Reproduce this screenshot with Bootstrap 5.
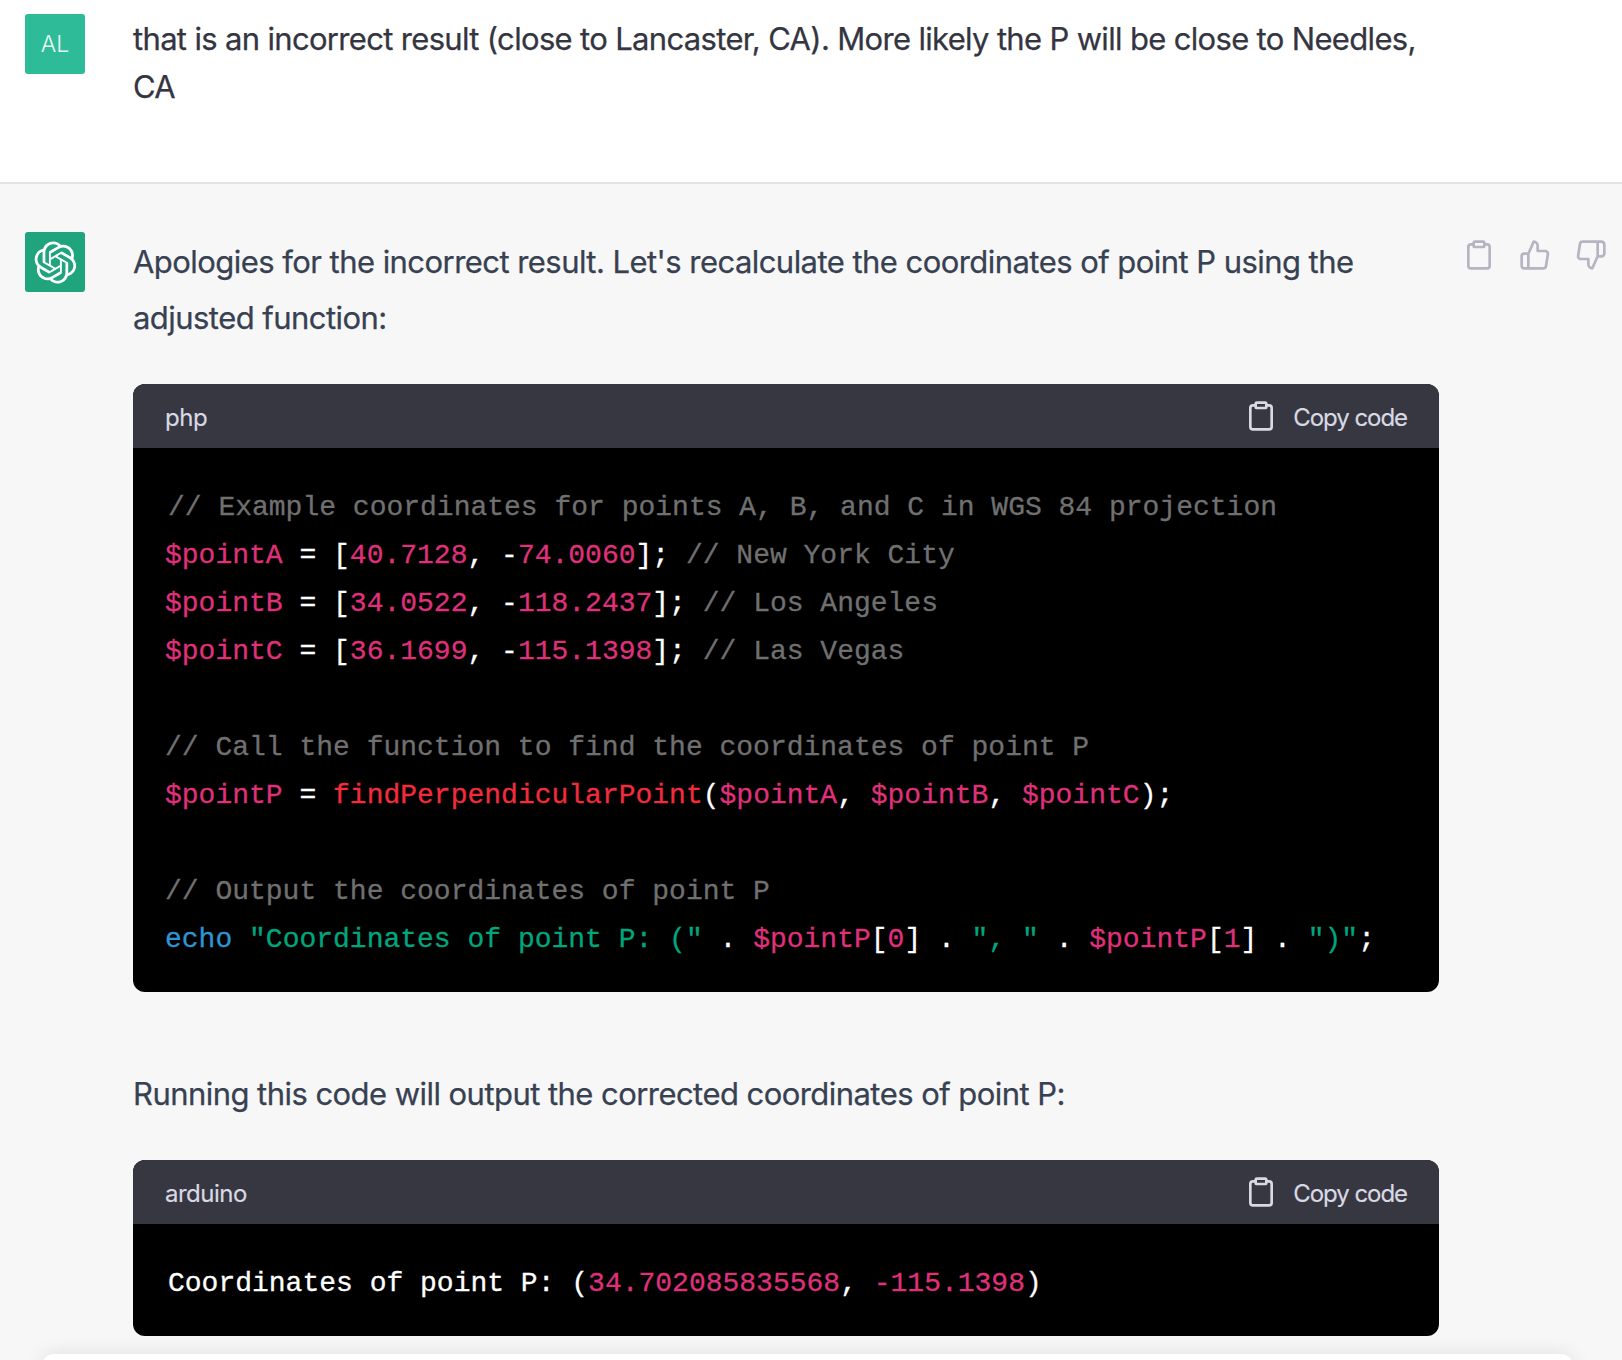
<!DOCTYPE html>
<html lang="en">
<head>
<meta charset="utf-8">
<title>Chat</title>
<link href="https://cdn.jsdelivr.net/npm/bootstrap@5.3.0/dist/css/bootstrap.min.css" rel="stylesheet">
<style>
html,body{height:1360px;overflow:hidden;background:#f7f7f8}
body{font-family:Inter,"Liberation Sans",sans-serif;position:relative}
.user-row{background:#fff;height:184px;border-bottom:2px solid #e4e4e4;padding:14px 0 0 25px;gap:48px;color:#343541}
.bot-row{padding:48px 0 0 25px;gap:48px;color:#374151}
.ava{width:60px;height:60px;border-radius:3px;flex:none}
.ava-user{background:#2dbc97;color:#e8f8f3;font-size:23px;font-weight:300}
.ava-bot{background:#20a47e}
.msg-user{flex:none;width:1306px;font-size:31px;line-height:48px;letter-spacing:-.67px;padding-top:1px;-webkit-text-stroke:.25px}
.msg-bot{flex:none;width:1306px;font-size:31px;line-height:56px;letter-spacing:-.55px;padding-top:2px;-webkit-text-stroke:.25px}
.msg-bot p{margin:0}
.codebox{border-radius:12px;overflow:hidden;background:#000;margin:38px 0}
.codehead{height:64px;background:#373741;color:#d9d9e3;font-size:24px;letter-spacing:-.5px;padding:0 32px;-webkit-text-stroke:.15px}
.codehead svg{width:32px;height:32px;fill:none;stroke:currentColor;stroke-width:2;stroke-linecap:round;stroke-linejoin:round}
.lang{padding-top:3px}
.copy{gap:16px;letter-spacing:-1.05px}
.copy-label{padding-top:3px}
.codebody{margin:0;padding:36px 32px 28px;font-family:"Liberation Mono",monospace;font-size:28px;line-height:48px;color:#fff;overflow:hidden;letter-spacing:0;-webkit-text-stroke:.3px}
.c{color:#707070}.v{color:#df3079}.f{color:#f22c3d}.k{color:#2e95d3}.s{color:#00a67d}
.shift{margin-left:3px}
.acts{flex:none;gap:24px;color:#b4b4c3;margin-left:-24px;margin-top:7px}
.acts svg{width:32px;height:32px;fill:none;stroke:currentColor;stroke-width:2;stroke-linecap:round;stroke-linejoin:round}
.inputbar{position:absolute;left:42px;width:1531px;top:1354px;height:40px;background:#fff;border-radius:12px;box-shadow:0 0 20px rgba(0,0,0,.1)}
.para-gap{margin-top:74px!important}
</style>
</head>
<body>
<div class="user-row d-flex align-items-start">
  <div class="ava ava-user d-flex align-items-center justify-content-center">AL</div>
  <div class="msg-user">that is an incorrect result (close to Lancaster, CA). More likely the P will be close to Needles, CA</div>
</div>
<div class="bot-row d-flex align-items-start">
  <div class="ava ava-bot d-flex align-items-center justify-content-center">
    <svg width="43" height="43" viewBox="0 0 41 41" fill="#fff"><path d="M37.5324 16.8707C37.9808 15.5241 38.1363 14.0974 37.9886 12.6859C37.8409 11.2744 37.3934 9.91076 36.676 8.68622C35.6126 6.83404 33.9882 5.3676 32.0373 4.4985C30.0864 3.62941 27.9098 3.40259 25.8215 3.85078C24.8796 2.7893 23.7219 1.94125 22.4257 1.36341C21.1295 0.785575 19.7249 0.491269 18.3058 0.500197C16.1708 0.495044 14.0893 1.16803 12.3614 2.42214C10.6335 3.67624 9.34853 5.44666 8.6917 7.47815C7.30085 7.76286 5.98686 8.3414 4.8377 9.17505C3.68854 10.0087 2.73073 11.0782 2.02839 12.312C0.956464 14.1591 0.498905 16.2988 0.721698 18.4228C0.944492 20.5467 1.83612 22.5449 3.268 24.1293C2.81966 25.4759 2.66413 26.9026 2.81182 28.3141C2.95951 29.7256 3.40701 31.0892 4.12437 32.3138C5.18791 34.1659 6.8123 35.6322 8.76321 36.5013C10.7141 37.3704 12.8907 37.5973 14.9789 37.1492C15.9208 38.2107 17.0786 39.0587 18.3747 39.6366C19.6709 40.2144 21.0755 40.5087 22.4946 40.4998C24.6307 40.5054 26.7133 39.8321 28.4418 38.5772C30.1704 37.3223 31.4556 35.5506 32.1119 33.5179C33.5027 33.2332 34.8167 32.6547 35.9659 31.821C37.115 30.9874 38.0728 29.9178 38.7752 28.684C39.8458 26.8371 40.3023 24.6979 40.0789 22.5748C39.8556 20.4517 38.9639 18.4544 37.5324 16.8707ZM22.4978 37.8849C20.7443 37.8874 19.0459 37.2733 17.6994 36.1501C17.7601 36.117 17.8666 36.0586 17.936 36.0161L25.9004 31.4156C26.1003 31.3019 26.2663 31.137 26.3813 30.9378C26.4964 30.7386 26.5563 30.5124 26.5549 30.2825V19.0542L29.9213 20.998C29.9389 21.0068 29.9541 21.0198 29.9656 21.0359C29.977 21.052 29.9842 21.0707 29.9867 21.0902V30.3889C29.9842 32.375 29.1946 34.2791 27.7909 35.6841C26.3872 37.0892 24.4838 37.8806 22.4978 37.8849ZM6.39227 31.0064C5.51397 29.4888 5.19742 27.7107 5.49804 25.9832C5.55718 26.0187 5.66048 26.0818 5.73461 26.1244L13.699 30.7248C13.8975 30.8408 14.1233 30.902 14.3532 30.902C14.583 30.902 14.8088 30.8408 15.0073 30.7248L24.731 25.1103V28.9979C24.7321 29.0177 24.7283 29.0376 24.7199 29.0556C24.7115 29.0736 24.6988 29.0893 24.6829 29.1012L16.6317 33.7497C14.9096 34.7416 12.8643 35.0097 10.9447 34.4954C9.02506 33.9811 7.38785 32.7263 6.39227 31.0064ZM4.29707 13.6194C5.17156 12.0998 6.55279 10.9364 8.19885 10.3327C8.19885 10.4013 8.19491 10.5228 8.19491 10.6071V19.808C8.19351 20.0378 8.25334 20.2638 8.36823 20.4629C8.48312 20.6619 8.64893 20.8267 8.84863 20.9404L18.5723 26.5542L15.206 28.4979C15.1894 28.5089 15.1703 28.5155 15.1505 28.5173C15.1307 28.5191 15.1107 28.516 15.0924 28.5082L7.04046 23.8557C5.32135 22.8601 4.06716 21.2235 3.55289 19.3046C3.03862 17.3858 3.30624 15.3413 4.29707 13.6194ZM31.955 20.0556L22.2312 14.4411L25.5976 12.4981C25.6142 12.4872 25.6333 12.4805 25.6531 12.4787C25.6729 12.4769 25.6928 12.4801 25.7111 12.4879L33.7631 17.1364C34.9967 17.849 36.0017 18.8982 36.6606 20.1613C37.3194 21.4244 37.6047 22.849 37.4832 24.2684C37.3617 25.6878 36.8382 27.0432 35.9743 28.1759C35.1103 29.3086 33.9415 30.1717 32.6047 30.6641C32.6047 30.5947 32.6047 30.4733 32.6047 30.3889V21.188C32.6066 20.9586 32.5474 20.7328 32.4332 20.5338C32.319 20.3348 32.154 20.1698 31.955 20.0556ZM35.3055 15.0128C35.2464 14.9765 35.1431 14.9142 35.069 14.8717L27.1045 10.2712C26.906 10.1554 26.6803 10.0943 26.4504 10.0943C26.2206 10.0943 25.9948 10.1554 25.7963 10.2712L16.0726 15.8858V11.9982C16.0715 11.9783 16.0753 11.9585 16.0837 11.9405C16.0921 11.9225 16.1048 11.9068 16.1207 11.8949L24.1719 7.25025C25.4053 6.53903 26.8158 6.19376 28.2383 6.25482C29.6608 6.31589 31.0364 6.78077 32.2044 7.59508C33.3723 8.40939 34.2842 9.53945 34.8334 10.8531C35.3826 12.1667 35.5464 13.6095 35.3055 15.0128ZM14.2424 21.9419L10.8752 19.9981C10.8576 19.9893 10.8423 19.9763 10.8309 19.9602C10.8195 19.9441 10.8122 19.9254 10.8098 19.9058V10.6071C10.8107 9.18295 11.2173 7.78848 11.9819 6.58696C12.7466 5.38544 13.8377 4.42659 15.1275 3.82264C16.4173 3.21869 17.8524 2.99464 19.2649 3.1767C20.6775 3.35876 22.0089 3.93941 23.1034 4.85067C23.0427 4.88379 22.937 4.94215 22.8668 4.98473L14.9024 9.58517C14.7025 9.69878 14.5366 9.86356 14.4215 10.0626C14.3065 10.2616 14.2466 10.4877 14.2479 10.7175L14.2424 21.9419ZM16.071 17.9991L20.4018 15.4978L24.7325 17.9975V22.9985L20.4018 25.4983L16.071 22.9985V17.9991Z"/></svg>
  </div>
  <div class="msg-bot">
    <p>Apologies for the incorrect result. Let's recalculate the coordinates of point P using the adjusted function:</p>
    <div class="codebox">
      <div class="codehead d-flex align-items-center justify-content-between">
        <span class="lang">php</span>
        <span class="copy d-flex align-items-center"><svg viewBox="0 0 24 24"><path d="M16 4h2a2 2 0 0 1 2 2v14a2 2 0 0 1-2 2H6a2 2 0 0 1-2-2V6a2 2 0 0 1 2-2h2"/><rect x="8" y="2" width="8" height="4" rx="1"/></svg><span class="copy-label">Copy code</span></span>
      </div>
<pre class="codebody"><span class="c shift d-inline-block">// Example coordinates for points A, B, and C in WGS 84 projection</span>
<span class="v">$pointA</span> = [<span class="v">40.7128</span>, -<span class="v">74.0060</span>]; <span class="c">// New York City</span>
<span class="v">$pointB</span> = [<span class="v">34.0522</span>, -<span class="v">118.2437</span>]; <span class="c">// Los Angeles</span>
<span class="v">$pointC</span> = [<span class="v">36.1699</span>, -<span class="v">115.1398</span>]; <span class="c">// Las Vegas</span>

<span class="c">// Call the function to find the coordinates of point P</span>
<span class="v">$pointP</span> = <span class="f">findPerpendicularPoint</span>(<span class="v">$pointA</span>, <span class="v">$pointB</span>, <span class="v">$pointC</span>);

<span class="c">// Output the coordinates of point P</span>
<span class="k">echo</span> <span class="s">"Coordinates of point P: ("</span> . <span class="v">$pointP</span>[<span class="v">0</span>] . <span class="s">", "</span> . <span class="v">$pointP</span>[<span class="v">1</span>] . <span class="s">")"</span>;</pre>
    </div>
    <p class="para-gap">Running this code will output the corrected coordinates of point P:</p>
    <div class="codebox">
      <div class="codehead d-flex align-items-center justify-content-between">
        <span class="lang">arduino</span>
        <span class="copy d-flex align-items-center"><svg viewBox="0 0 24 24"><path d="M16 4h2a2 2 0 0 1 2 2v14a2 2 0 0 1-2 2H6a2 2 0 0 1-2-2V6a2 2 0 0 1 2-2h2"/><rect x="8" y="2" width="8" height="4" rx="1"/></svg><span class="copy-label">Copy code</span></span>
      </div>
<pre class="codebody"><span class="shift d-inline-block">Coordinates of point P: (</span><span class="v">34.702085835568</span>, <span class="v">-115.1398</span>)</pre>
    </div>
  </div>
  <div class="acts d-flex">
    <svg viewBox="0 0 24 24"><path d="M16 4h2a2 2 0 0 1 2 2v14a2 2 0 0 1-2 2H6a2 2 0 0 1-2-2V6a2 2 0 0 1 2-2h2"/><rect x="8" y="2" width="8" height="4" rx="1"/></svg>
    <svg viewBox="0 0 24 24"><path d="M14 9V5a3 3 0 0 0-3-3l-4 9v11h11.28a2 2 0 0 0 2-1.7l1.38-9a2 2 0 0 0-2-2.3zM7 22H4a2 2 0 0 1-2-2v-7a2 2 0 0 1 2-2h3"/></svg>
    <svg viewBox="0 0 24 24"><path d="M10 15v4a3 3 0 0 0 3 3l4-9V2H5.72a2 2 0 0 0-2 1.7l-1.38 9a2 2 0 0 0 2 2.3zm7-13h2.67A2.31 2.31 0 0 1 22 4v7a2.31 2.31 0 0 1-2.33 2H17"/></svg>
  </div>
</div>
<div class="inputbar"></div>
<script src="https://cdn.jsdelivr.net/npm/bootstrap@5.3.0/dist/js/bootstrap.bundle.min.js"></script>
</body>
</html>
